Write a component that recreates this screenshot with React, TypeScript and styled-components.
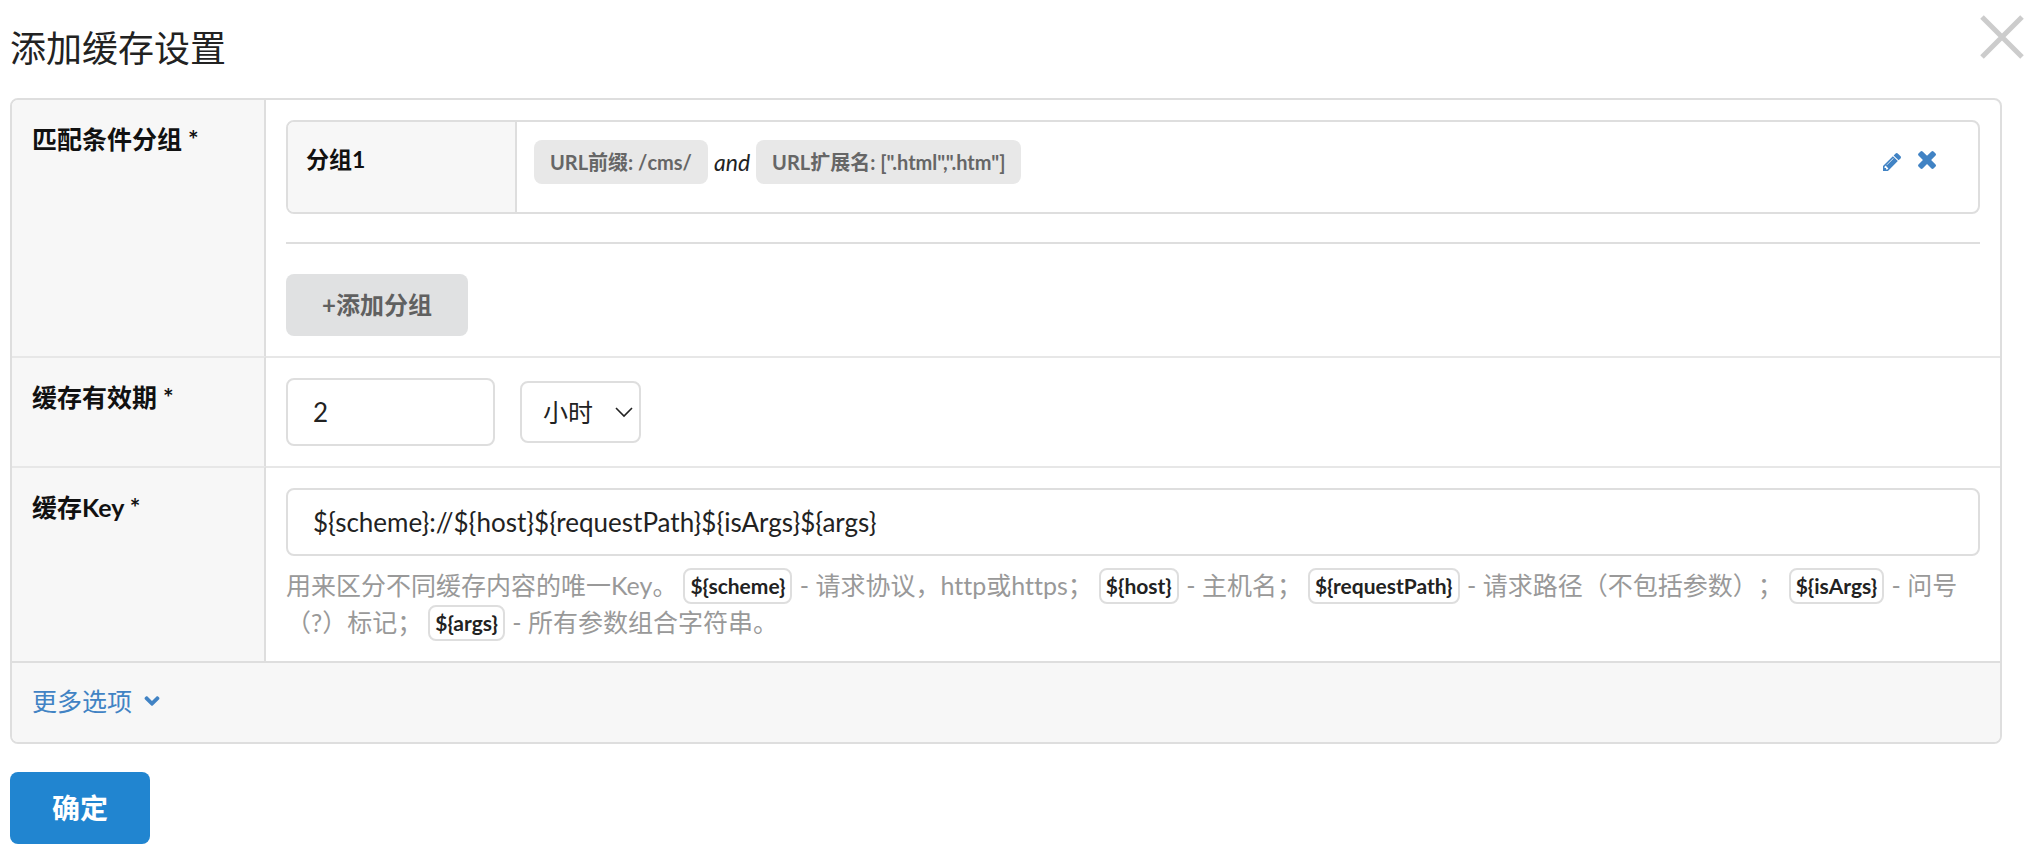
import React, { useState } from "react";
import styled, { createGlobalStyle } from "styled-components";
import { FaAngleDown } from "react-icons/fa";

const GlobalStyle = createGlobalStyle`
  *, *::before, *::after { box-sizing: border-box; }
  body {
    margin: 0;
    background: #fff;
    color: #222;
    font-family: Lato, "Noto Sans CJK SC", sans-serif;
    font-size: 25px;
    line-height: 36px;
    font-variant-ligatures: none;
    text-spacing-trim: space-all;
  }
  button, input, select { font: inherit; color: inherit; margin: 0; font-variant-ligatures: none; }
  button { border: 0; background: none; padding: 0; cursor: pointer; }
`;

const Page = styled.main`
  padding: 0 24px 18px 10px;
`;

const Header = styled.header`
  display: flex;
  align-items: flex-start;
  justify-content: space-between;
  height: 98px;
  margin-right: -24px;
  padding: 13px 2px 0 0;
`;

const Title = styled.h1`
  margin: 12px 0 0;
  font-size: 36px;
  line-height: 46px;
  font-weight: 400;
`;

const CloseButton = styled.button`
  display: flex;
  color: #ccc;
`;

const Panel = styled.section`
  overflow: hidden;
  border: 2px solid #dedede;
  border-radius: 8px;
`;

const Row = styled.div`
  display: grid;
  grid-template-columns: 254px minmax(0, 1fr);

  & + & > * { border-top: 2px solid #e7e7e7; }
`;

const LabelCell = styled.div`
  padding: 21px 20px;
  background: #f7f7f7;
  border-right: 2px solid #dedede;
  color: #111;
  font-weight: 700;
`;

const FieldCell = styled.div`
  padding: 20px;
`;

const Group = styled.div`
  display: grid;
  grid-template-columns: 229px minmax(0, 1fr) auto;
  min-height: 94px;
  border: 2px solid #dedede;
  border-radius: 8px;
  overflow: hidden;
`;

const GroupName = styled.div`
  padding: 20px 18px;
  background: #f7f7f7;
  border-right: 2px solid #dedede;
  color: #111;
  font-size: 23px;
  line-height: 34px;
  font-weight: 700;
`;

const Conditions = styled.div`
  display: flex;
  flex-wrap: wrap;
  align-items: flex-start;
  gap: 6px;
  padding: 18px 17px;
  line-height: 44px;
  font-size: 23px;
`;

const Condition = styled.span`
  padding: 0 16px;
  border-radius: 8px;
  background: #e8e8e8;
  color: #666;
  font-size: 20px;
  font-weight: 700;
`;

const Actions = styled.div`
  display: flex;
  align-items: flex-start;
  gap: 17px;
  padding: 29px 42px 0 0;
  color: #4183c4;
`;

const IconButton = styled.button`
  display: flex;
`;

const Divider = styled.hr`
  margin: 28px 0 30px;
  border: 0;
  border-top: 2px solid #dedede;
`;

const AddButton = styled.button`
  height: 62px;
  padding: 0 36px;
  border-radius: 8px;
  background: #e0e1e2;
  color: #606060;
  font-size: 24px;
  font-weight: 700;
`;

const Duration = styled.div`
  display: flex;
  align-items: center;
  gap: 25px;
`;

const TextInput = styled.input<{ $width: string }>`
  display: block;
  width: ${(p) => p.$width};
  height: 68px;
  padding: 0 25px;
  border: 2px solid #dedede;
  border-radius: 8px;
  background: #fff;
  font-size: 26px;
  outline: 0;
`;

const SelectBox = styled.div`
  display: grid;
  align-items: center;
  width: 121px;

  & > * { grid-area: 1 / 1; }
  & > svg { justify-self: end; margin-right: 8px; pointer-events: none; }
`;

const Select = styled.select`
  width: 100%;
  height: 62px;
  padding: 0 36px 0 21px;
  border: 2px solid #dedede;
  border-radius: 8px;
  background: #fff;
  appearance: none;
  outline: 0;
`;

const Help = styled.p`
  margin: 11px 0 0;
  color: #999;
  line-height: 37px;
`;

const Variable = styled.code`
  display: inline-block;
  margin: 1px 1px 0 6px;
  padding: 0 5px;
  border: 2px solid #dedede;
  border-radius: 8px;
  color: #222;
  font-family: inherit;
  font-size: 21px;
  line-height: 32px;
  font-weight: 700;
  vertical-align: top;
`;

const More = styled.div`
  padding: 18px 20px 22px;
  border-top: 2px solid #dedede;
  background: #f7f7f7;
`;

const MoreLink = styled.a`
  display: inline-flex;
  align-items: center;
  gap: 8px;
  height: 39px;
  color: #4183c4;
  text-decoration: none;
`;

const SubmitButton = styled.button`
  display: block;
  height: 72px;
  margin-top: 28px;
  padding: 0 42px;
  border-radius: 8px;
  background: #2185d0;
  color: #fff;
  font-size: 28px;
  font-weight: 700;
`;

const PencilIcon = () => (
  <svg width="18" height="20" viewBox="128 -19 1515 1683" fill="currentColor" aria-hidden="true">
    <path d="M491 1536l91-91-235-235-91 91v107h128v128h107zm523-928q0-22-22-22-10 0-17 7l-542 542q-7 7-7 17 0 22 22 22 10 0 17-7l542-542q7-7 7-17zm-54-192l416 416-832 832h-416v-416zm683 96q0 53-37 90l-166 166-416-416 166-165q36-38 90-38 53 0 91 38l235 234q37 39 37 91z" />
  </svg>
);

const RemoveIcon = () => (
  <svg width="18" height="18" viewBox="298 366 1192 1192" fill="currentColor" aria-hidden="true">
    <path d="M1490 1322q0 40-28 68l-136 136q-28 28-68 28t-68-28l-294-294-294 294q-28 28-68 28t-68-28l-136-136q-28-28-28-68t28-68l294-294-294-294q-28-28-28-68t28-68l136-136q28-28 68-28t68 28l294 294 294-294q28-28 68-28t68 28l136 136q28 28 28 68t-28 68l-294 294 294 294q28 28 28 68z" />
  </svg>
);

const help = [
  { name: "${scheme}", text: " - 请求协议，http或https；" },
  { name: "${host}", text: " - 主机名；" },
  { name: "${requestPath}", text: " - 请求路径（不包括参数）；" },
  { name: "${isArgs}", text: " - 问号（?）标记；" },
  { name: "${args}", text: " - 所有参数组合字符串。" },
];

export default function App() {
  const [life, setLife] = useState("2");
  const [unit, setUnit] = useState("hour");
  const [key, setKey] = useState("${scheme}://${host}${requestPath}${isArgs}${args}");

  return (
    <Page lang="zh-CN">
      <GlobalStyle />
      <Header>
        <Title>添加缓存设置</Title>
        <CloseButton type="button" aria-label="关闭">
          <svg width="44" height="48" viewBox="0 0 44 48" fill="none" stroke="currentColor" strokeWidth="5" aria-hidden="true">
            <path d="M2 4l40 40M42 4L2 44" />
          </svg>
        </CloseButton>
      </Header>
      <form onSubmit={(e) => e.preventDefault()}>
        <Panel>
          <Row>
            <LabelCell>匹配条件分组 *</LabelCell>
            <FieldCell>
              <Group>
                <GroupName>分组1</GroupName>
                <Conditions>
                  <Condition>URL前缀: /cms/</Condition>
                  <em>and</em>
                  <Condition>URL扩展名: [".html",".htm"]</Condition>
                </Conditions>
                <Actions>
                  <IconButton type="button" aria-label="修改"><PencilIcon /></IconButton>
                  <IconButton type="button" aria-label="删除"><RemoveIcon /></IconButton>
                </Actions>
              </Group>
              <Divider />
              <AddButton type="button">+添加分组</AddButton>
            </FieldCell>
          </Row>
          <Row>
            <LabelCell><label htmlFor="life">缓存有效期 *</label></LabelCell>
            <FieldCell>
              <Duration>
                <TextInput id="life" $width="209px" value={life} onChange={(e) => setLife(e.target.value)} />
                <SelectBox>
                  <Select aria-label="时间单位" value={unit} onChange={(e) => setUnit(e.target.value)}>
                    <option value="minute">分钟</option>
                    <option value="hour">小时</option>
                    <option value="day">天</option>
                  </Select>
                  <svg width="18" height="12" viewBox="0 0 18 12" fill="none" stroke="currentColor" strokeWidth="1.6" aria-hidden="true">
                    <path d="M1 2l8 8 8-8" />
                  </svg>
                </SelectBox>
              </Duration>
            </FieldCell>
          </Row>
          <Row>
            <LabelCell><label htmlFor="key">缓存Key *</label></LabelCell>
            <FieldCell>
              <TextInput id="key" $width="100%" value={key} onChange={(e) => setKey(e.target.value)} />
              <Help>
                用来区分不同缓存内容的唯一Key。
                {help.map((item) => (
                  <React.Fragment key={item.name}>
                    <Variable>{item.name}</Variable>
                    {item.text}
                  </React.Fragment>
                ))}
              </Help>
            </FieldCell>
          </Row>
          <More>
            <MoreLink href="#more">更多选项 <FaAngleDown size={24} aria-hidden="true" /></MoreLink>
          </More>
        </Panel>
        <SubmitButton type="submit">确定</SubmitButton>
      </form>
    </Page>
  );
}
